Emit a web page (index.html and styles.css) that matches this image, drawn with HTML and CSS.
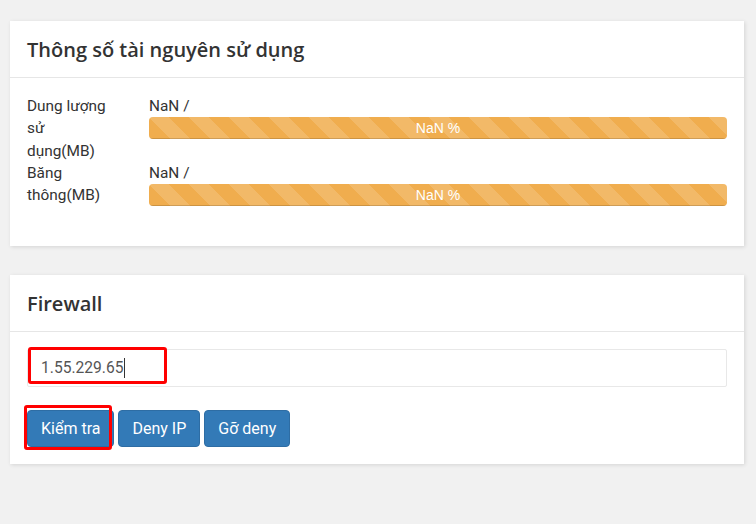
FILE: index.html
```html
<!DOCTYPE html>
<html lang="vi">
<head>
    <meta charset="UTF-8">
    <meta name="viewport" content="width=device-width, initial-scale=1.0">
    <title>Thông số tài nguyên</title>
    <link rel="stylesheet" href="styles.css">
</head>
<body>

<div class="container">
    <!-- Resource usage -->
    <div class="panel">
        <div class="panel-heading">
            <h3 class="panel-title">Thông số tài nguyên sử dụng</h3>
        </div>
        <div class="panel-body usage">
            <div class="usage-row">
                <div class="usage-label">Dung lượng sử dụng(MB)</div>
                <div class="usage-value">
                    <div>NaN /</div>
                    <div class="progress">
                        <div class="progress-bar" style="width: 100%">NaN %</div>
                    </div>
                </div>
            </div>
            <div class="usage-row">
                <div class="usage-label">Băng thông(MB)</div>
                <div class="usage-value">
                    <div>NaN /</div>
                    <div class="progress">
                        <div class="progress-bar" style="width: 100%">NaN %</div>
                    </div>
                </div>
            </div>
        </div>
    </div>

    <!-- Firewall -->
    <div class="panel firewall">
        <div class="panel-heading">
            <h3 class="panel-title">Firewall</h3>
        </div>
        <div class="panel-body">
            <div class="ip-field"><span>1.55.229.65</span><span class="caret"></span></div>
            <div class="button-row">
                <button class="btn">Kiểm tra</button>
                <button class="btn">Deny IP</button>
                <button class="btn">Gỡ deny</button>
            </div>
        </div>
        <!-- highlight marks -->
        <div class="mark mark-ip"></div>
        <div class="mark mark-check"></div>
    </div>
</div>

</body>
</html>
```

FILE: styles.css
```css
body {
    margin: 0;
    padding: 0;
    background-color: #f1f1f1;
    font-family: Roboto, "Liberation Sans", Arial, sans-serif;
    font-size: 15.4px;
    color: #333;
}

.container {
    padding: 21px 12px 20px 10px;
}

.panel {
    background-color: #fff;
    box-shadow: 1px 1px 4px rgba(0, 0, 0, 0.12);
    margin-bottom: 29px;
}

.firewall {
    position: relative;
}

.panel-heading {
    height: 56px;
    display: flex;
    align-items: center;
    padding: 0 17px;
    border-bottom: 1px solid #e6e6e6;
}

.panel-title {
    margin: 0;
    font-family: "Open Sans", "Noto Sans", sans-serif;
    font-weight: 600;
    font-size: 20px;
    color: #333;
}

.panel-body {
    padding: 17px 17px 17px 17px;
}

.usage {
    padding-top: 17px;
    padding-bottom: 20px;
}

.usage-row {
    display: flex;
    line-height: 22.3px;
}

.usage-label {
    width: 88px;
    margin-right: 34px;
    flex-shrink: 0;
}

.usage-value {
    flex: 1;
}

.progress {
    height: 22px;
    margin-bottom: 20px;
    border-radius: 4px;
    overflow: hidden;
    background-color: #f5f5f5;
}

.usage-row:first-child .progress {
    margin-bottom: 0;
}

.progress-bar {
    height: 100%;
    background-color: #f0ad4e;
    background-image: linear-gradient(45deg, rgba(255, 255, 255, 0.15) 25%, transparent 25%, transparent 50%, rgba(255, 255, 255, 0.15) 50%, rgba(255, 255, 255, 0.15) 75%, transparent 75%, transparent);
    background-size: 40px 40px;
    box-shadow: inset 0 -1px 0 rgba(0, 0, 0, 0.15);
    color: #fff;
    font-family: "Liberation Sans", Arial, sans-serif;
    font-size: 14px;
    line-height: 22px;
    text-align: center;
}

.ip-field {
    height: 36px;
    border: 1px solid #e8e8e8;
    border-radius: 2px;
    padding: 0 13px;
    display: flex;
    align-items: center;
    font-size: 15.6px;
    color: #555;
}

.caret {
    width: 1px;
    height: 20px;
    background-color: #333;
    margin-left: 1px;
}

.button-row {
    display: flex;
    gap: 4px;
    margin-top: 23px;
}

.btn {
    font-family: Roboto, "Liberation Sans", Arial, sans-serif;
    font-size: 16px;
    line-height: 21px;
    padding: 7px 13px;
    color: #fff;
    background-color: #337ab7;
    border: 1px solid #2e6da4;
    border-radius: 4px;
    cursor: pointer;
}

.mark {
    position: absolute;
    border: 3px solid #ff0000;
    border-radius: 3px;
    box-sizing: border-box;
}

.mark-ip {
    left: 18px;
    top: 72px;
    width: 139px;
    height: 37px;
}

.mark-check {
    left: 14px;
    top: 130px;
    width: 88px;
    height: 45px;
}
```
